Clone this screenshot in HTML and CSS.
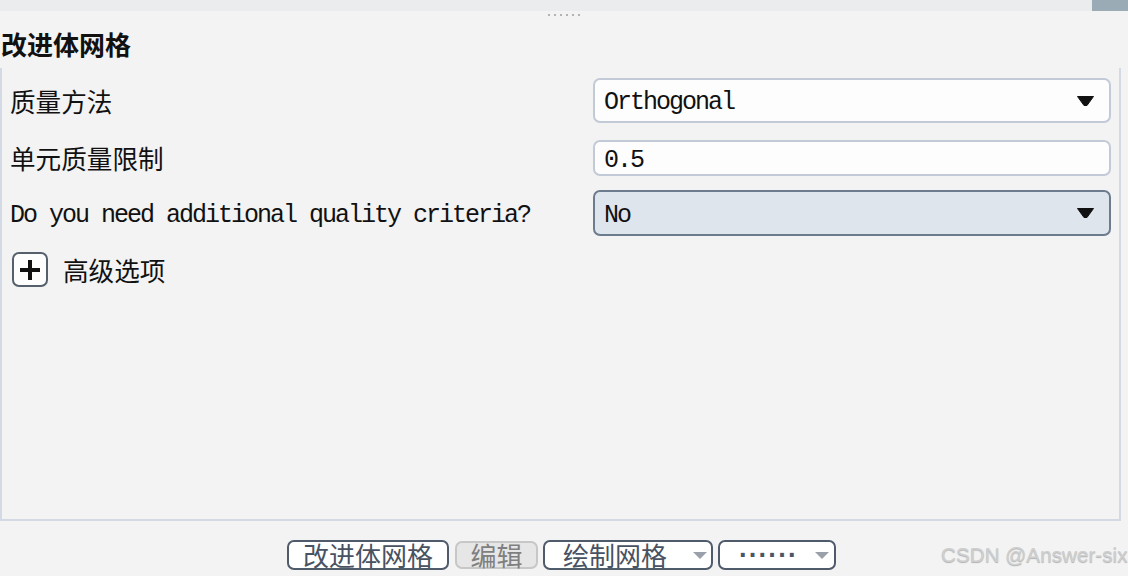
FILE: index.html
```html
<!DOCTYPE html>
<html lang="zh-CN">
<head>
<meta charset="utf-8">
<title>改进体网格</title>
<link rel="stylesheet" href="styles.css">
</head>
<body>
<div class="app">
  <div class="topbar"><div class="topbar-block"></div></div>
  <div class="grip"><span></span><span></span><span></span><span></span><span></span><span></span></div>
  <h1 class="title">改进体网格</h1>
  <section class="panel">
    <div class="field field-method">
      <div class="label">质量方法</div>
      <div class="control control-light">
        <span class="value">Orthogonal</span>
        <svg class="caret" width="17" height="10" viewBox="0 0 17 10"><path d="M0.5 0.5 H16.5 L10 9.5 H7 Z" fill="#111" stroke="#111" stroke-linejoin="round"/></svg>
      </div>
    </div>
    <div class="field field-limit">
      <div class="label">单元质量限制</div>
      <div class="control control-light">
        <span class="value">0.5</span>
      </div>
    </div>
    <div class="field field-criteria">
      <div class="label label-mono">Do you need additional quality criteria?</div>
      <div class="control control-dark">
        <span class="value">No</span>
        <svg class="caret" width="17" height="10" viewBox="0 0 17 10"><path d="M0.5 0.5 H16.5 L10 9.5 H7 Z" fill="#111" stroke="#111" stroke-linejoin="round"/></svg>
      </div>
    </div>
    <div class="advanced">
      <span class="plus-box">
        <svg width="20" height="20" viewBox="0 0 20 20"><rect x="0" y="8" width="20" height="4" fill="#111"/><rect x="8" y="0" width="4" height="20" fill="#111"/></svg>
      </span>
      <span class="advanced-text">高级选项</span>
    </div>
  </section>
  <footer class="toolbar">
    <button class="btn btn-primary">改进体网格</button>
    <button class="btn btn-disabled">编辑</button>
    <button class="btn btn-drop btn-draw"><span>绘制网格</span><svg class="mini-caret" width="14" height="7" viewBox="0 0 14 7"><path d="M0 0 H14 L7 7 Z" fill="#9ba1aa"/></svg></button>
    <button class="btn btn-drop btn-more"><span class="dots">······</span><svg class="mini-caret" width="14" height="7" viewBox="0 0 14 7"><path d="M0 0 H14 L7 7 Z" fill="#9ba1aa"/></svg></button>
  </footer>
  <div class="watermark">CSDN @Answer-six</div>
</div>
</body>
</html>
```
FILE: styles.css
```css
* { box-sizing: border-box; }
html, body { margin: 0; padding: 0; }
body {
  width: 1128px;
  height: 576px;
  overflow: hidden;
  background: #f3f3f3;
  font-family: "Noto Sans CJK SC", sans-serif;
  color: #111;
}
.app { position: relative; width: 1128px; height: 576px; }

.topbar {
  height: 11px;
  background: #ebecee;
  display: flex;
  justify-content: flex-end;
}
.topbar-block { width: 36px; background: #9aabb6; }

.grip {
  display: flex;
  justify-content: center;
  gap: 4px;
  margin-top: 3px;
  height: 2px;
}
.grip span { width: 2px; height: 2px; background: #b3b3b3; }

.title {
  margin: 0;
  height: 52px;
  padding: 4px 0 0 1px;
  display: flex;
  align-items: center;
  font-size: 26px;
  font-weight: 700;
  line-height: 1;
}

.panel {
  width: 1121px;
  height: 453px;
  border: 2px solid #d3d9e5;
  border-top: 0;
  padding: 10px 8px 0 8px;
  display: flex;
  flex-direction: column;
}
.field {
  display: grid;
  grid-template-columns: 1fr 518px;
  align-items: center;
}
.field-method { height: 45px; }
.field-limit { height: 36px; margin-top: 17px; }
.field-criteria { height: 46px; margin-top: 14px; }

.label {
  font-size: 25.6px;
  line-height: 1;
  white-space: nowrap;
}
.label-mono,
.value {
  font-family: "Liberation Mono", monospace;
  font-size: 25px;
  letter-spacing: -2px;
  line-height: 1;
  padding-top: 4px;
  white-space: nowrap;
}
.control {
  height: 100%;
  display: flex;
  align-items: center;
  justify-content: space-between;
  padding: 0 15px 0 9px;
  border: 2px solid #c2cad7;
  border-radius: 7px;
  background: #fdfdfd;
}
.control-dark { border-color: #6c7b8e; background: #dfe5ed; }
.caret { display: block; }

.advanced {
  display: flex;
  align-items: center;
  gap: 15px;
  height: 35px;
  margin-top: 16px;
  padding-left: 2px;
}
.plus-box {
  width: 36px;
  height: 35px;
  border: 2px solid #56606d;
  border-radius: 7px;
  background: #fdfdfd;
  display: flex;
  align-items: center;
  justify-content: center;
}
.plus-box svg { display: block; }
.advanced-text { font-size: 25.6px; line-height: 1; }

.toolbar {
  display: flex;
  align-items: flex-start;
  justify-content: center;
  gap: 5px;
  width: 1123px;
  padding-top: 19px;
}
.btn {
  height: 30px;
  margin: 0;
  border: 2px solid #4f5b6b;
  border-radius: 7px;
  background: #fff;
  font-family: "Noto Sans CJK SC", sans-serif;
  font-size: 26px;
  line-height: 26px;
  color: #485262;
  padding: 0;
  display: flex;
  align-items: center;
  justify-content: center;
}
.btn-primary { width: 162px; }
.btn-disabled {
  width: 83px;
  height: 28px;
  margin-top: 1px;
  margin-left: 1px;
  background: #e6e6e6;
  border-color: #c7c7c7;
  color: #7f7f7f;
}
.btn-drop { justify-content: space-between; }
.btn-draw { width: 170px; padding: 0 4px 0 18px; }
.btn-more { width: 118px; padding: 0 5px 0 19px; }
.mini-caret { display: block; }
.dots {
  font-family: "Liberation Sans", sans-serif;
  font-weight: 700;
  font-size: 27px;
  letter-spacing: 0.8px;
  color: #4a5566;
}

.watermark {
  position: absolute;
  left: 941px;
  top: 543px;
  font-family: "Liberation Sans", sans-serif;
  font-size: 20.7px;
  line-height: 24px;
  color: #cfcfcf;
  text-shadow: 0 1px 1px rgba(0, 0, 0, 0.28);
  white-space: nowrap;
}
```
